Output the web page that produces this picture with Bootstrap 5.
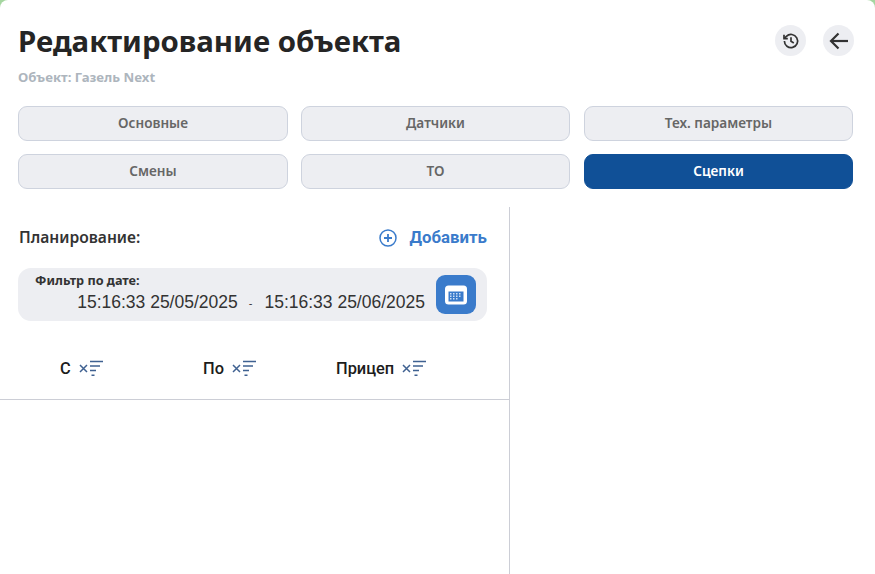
<!DOCTYPE html>
<html lang="ru"><head><meta charset="utf-8">
<link href="https://cdn.jsdelivr.net/npm/bootstrap@5.3.0/dist/css/bootstrap.min.css" rel="stylesheet">
<style>
html,body{height:100%;margin:0}
body{background:#a5d6a0;font-family:"Noto Sans",sans-serif;overflow:hidden}
.shell{background:#fff;height:574px;width:875px;border-radius:8px 8px 0 0;display:flex;flex-direction:column}
.head{padding:24px 21px 0 18px}
.ttl{font-size:29.4px;font-weight:700;line-height:34px;color:#252525;margin:0}
.sub{font-size:13.2px;font-weight:700;color:#adb5bd;line-height:18px;margin-top:10px}
.rnd{width:31px;height:31px;border-radius:50%;background:#edeef2;border:0;padding:0}
.tabs{display:grid;grid-template-columns:270px 269px 270px;gap:13px;padding:20px 0 0 18px}
.tabb{height:35px;border-radius:9px;background:#edeef2;border:1px solid #ced3de;font-size:13.6px;font-weight:600;color:#666;padding:0;display:flex;align-items:center;justify-content:center}
.tabb:nth-child(3n){margin-left:1px}
.tabb.on{background:#105097;border-color:#105097;color:#fff}
.lower{flex:1;display:flex;margin-top:18px;min-height:0}
.lpane{width:510px;border-right:1px solid #ccced6}
.plan{display:flex;justify-content:space-between;align-items:center;padding:20px 22px 0 19px;height:41px}
.plan b{font-size:15.6px;font-weight:600;color:#333}
.addl{color:#3a7bcb;font-size:16.8px;font-weight:700;font-family:Roboto,sans-serif;display:flex;align-items:center;gap:13px}
.filt{margin:20px 22px 0 18px;height:53px;background:#edeef2;border-radius:13px;position:relative;display:flex;align-items:center;justify-content:flex-end;padding-right:11px}
.fl{position:absolute;left:17px;top:4px;font-size:12.7px;font-weight:700;color:#333;line-height:16px}
.dts{font-family:"Liberation Sans",sans-serif;font-size:17.5px;color:#333;display:flex;align-items:center;margin:14px 11px 0 0;line-height:20px}
.dash{font-size:11px;margin:3px 12px 0 11px}
.calb{width:40px;height:39px;background:#3a7bcb;border-radius:9px;border:0;padding:0;display:flex;align-items:center;justify-content:center}
.thr{display:grid;grid-template-columns:60px 143px 133px 1fr;height:79px;border-bottom:1px solid #ccced6;padding-top:38px}
.thc{display:flex;align-items:flex-start;font-family:Roboto,sans-serif;font-weight:500;font-size:16.4px;color:#1c1c1c;line-height:19px;gap:8px}
.thc svg{margin-top:1px}
</style></head><body>
<div class="shell">
<div class="head d-flex justify-content-between align-items-start">
<div><h1 class="ttl">Редактирование объекта</h1><div class="sub">Объект: Газель Next</div></div>
<div class="d-flex" style="gap:17px;margin-top:1px">
<button class="rnd d-flex align-items-center justify-content-center" aria-label="История"><svg width="20" height="20" viewBox="0 0 20 20" fill="none" stroke="#333" stroke-width="1.7"><path d="M3.400 10a6.600 6.600 0 1 0 2-4.700L3.200 7.400"/><path d="M3 3.800v3.800h3.800"/><path d="M10 6.300v4l2.800 1.700"/></svg></button>
<button class="rnd d-flex align-items-center justify-content-center" aria-label="Назад"><svg width="22" height="22" viewBox="0 0 22 22" fill="none" stroke="#333" stroke-width="2.200"><path d="M20 11H3"/><path d="M10.500 3.500 3 11l7.500 7.500"/></svg></button>
</div></div>
<div class="tabs">
<button class="tabb">Основные</button><button class="tabb">Датчики</button><button class="tabb">Тех. параметры</button>
<button class="tabb">Смены</button><button class="tabb">ТО</button><button class="tabb on">Сцепки</button>
</div>
<div class="lower"><div class="lpane">
<div class="plan"><b>Планирование:</b><span class="addl"><svg width="18" height="18" viewBox="0 0 18 18" fill="none" stroke="#3a7bcb" stroke-width="1.5"><circle cx="9" cy="9" r="8"/><path d="M9 5v8M5 9h8" stroke-width="1.8"/></svg>Добавить</span></div>
<div class="filt"><span class="fl">Фильтр по дате:</span>
<div class="dts"><span>15:16:33 25/05/2025</span><span class="dash">-</span><span>15:16:33 25/06/2025</span></div>
<button class="calb" aria-label="Календарь"><svg width="22" height="20" viewBox="0 0 22 20"><rect x="0" y="0.500" width="22" height="19" rx="3.500" fill="#fff"/><rect x="3.500" y="6.500" width="15" height="10" fill="#3a7bcb"/><g fill="#cfe0f5"><rect x="5" y="8" width="1.500" height="1.500"/><rect x="8" y="8" width="1.500" height="1.500"/><rect x="11" y="8" width="1.500" height="1.500"/><rect x="14" y="8" width="1.500" height="1.500"/><rect x="5" y="10.500" width="1.500" height="1.500"/><rect x="8" y="10.500" width="1.500" height="1.500"/><rect x="11" y="10.500" width="1.500" height="1.500"/><rect x="14" y="10.500" width="1.500" height="1.500"/><rect x="5" y="13" width="1.500" height="1.500"/><rect x="8" y="13" width="1.500" height="1.500"/><rect x="11" y="13" width="1.500" height="1.500"/></g></svg></button></div>
<div class="thr"><span></span>
<div class="thc">С<svg width="24" height="18" viewBox="0 0 24 18" fill="none" stroke="#3f6191" stroke-width="1.500"><path d="M1 5l7 7M8 5l-7 7"/><path d="M11 1.500h13M11 6h10M11 10.500h6M12.500 15.300h3"/></svg></div>
<div class="thc">По<svg width="24" height="18" viewBox="0 0 24 18" fill="none" stroke="#3f6191" stroke-width="1.500"><path d="M1 5l7 7M8 5l-7 7"/><path d="M11 1.500h13M11 6h10M11 10.500h6M12.500 15.300h3"/></svg></div>
<div class="thc">Прицеп<svg width="24" height="18" viewBox="0 0 24 18" fill="none" stroke="#3f6191" stroke-width="1.500"><path d="M1 5l7 7M8 5l-7 7"/><path d="M11 1.500h13M11 6h10M11 10.500h6M12.500 15.300h3"/></svg></div>
</div>
</div></div>
</div>
<script src="https://cdn.jsdelivr.net/npm/bootstrap@5.3.0/dist/js/bootstrap.bundle.min.js"></script>
</body></html>
